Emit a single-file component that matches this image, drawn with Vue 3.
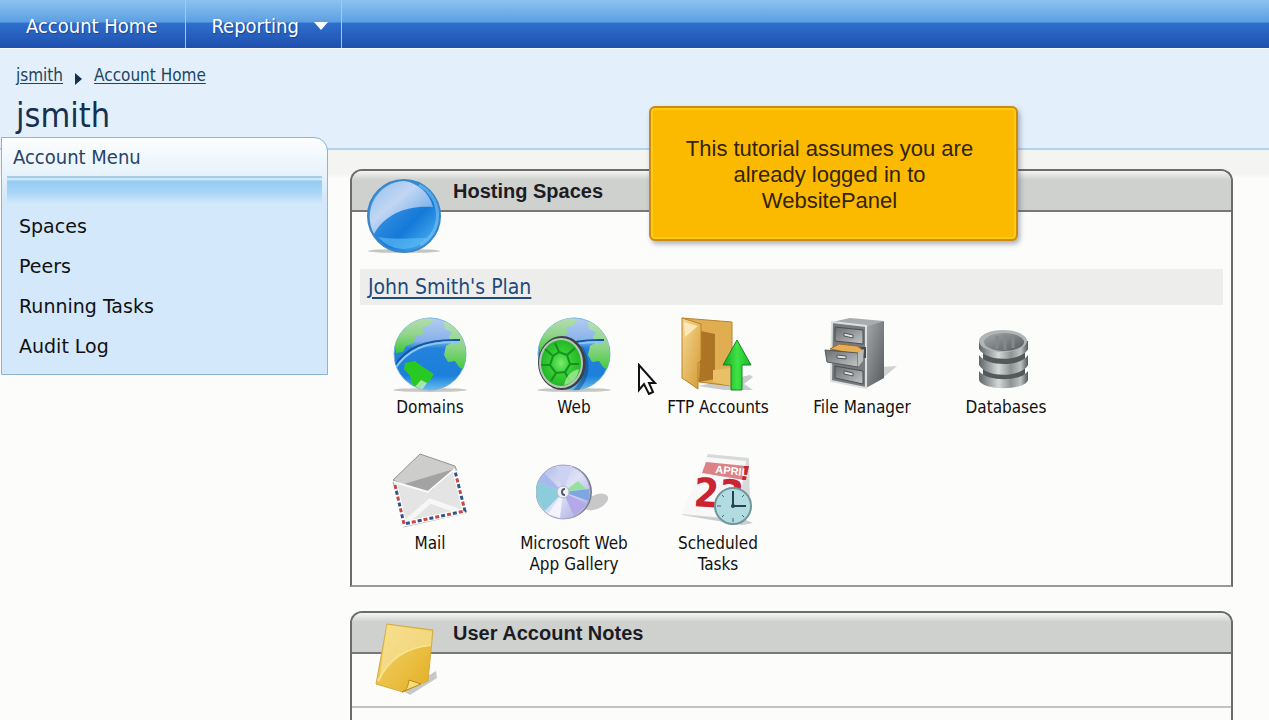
<template>
  <div class="page">
    <nav class="topbar" aria-label="Main">
      <a class="topbar__link" href="#home">Account Home</a>
      <a class="topbar__link topbar__link--menu" href="#reporting">
        Reporting
        <svg class="topbar__caret" viewBox="0 0 14 8" aria-hidden="true">
          <path d="M0 0h14L7 8z" fill="#fff" />
        </svg>
      </a>
    </nav>

    <header class="heading">
      <div class="crumbs">
        <a href="#jsmith">jsmith</a>
        <svg class="crumbs__arrow" viewBox="0 0 7 12" aria-hidden="true">
          <path d="M0 0l7 6-7 6z" fill="#16304a" />
        </svg>
        <a href="#home">Account Home</a>
      </div>
      <h1 class="heading__title">jsmith</h1>
    </header>

    <div class="layout">
      <aside class="menu">
        <h2 class="menu__title">Account Menu</h2>
        <div class="menu__band"></div>
        <ul class="menu__list">
          <li v-for="item in menuItems" :key="item">
            <a class="menu__link" href="#menu">{{ item }}</a>
          </li>
        </ul>
      </aside>

      <main class="content">
        <section class="panel">
          <div class="panel__head">
            <svg class="panel__icon" viewBox="0 0 76 76" aria-hidden="true">
              <defs>
                <linearGradient id="orb" x1="0" y1="0" x2="1" y2="1">
                  <stop offset="0" stop-color="#5ca9ea" />
                  <stop offset="0.6" stop-color="#1479d8" />
                  <stop offset="1" stop-color="#5cc2f7" />
                </linearGradient>
                <linearGradient id="orbShine" x1="0" y1="0" x2="1" y2="1">
                  <stop offset="0" stop-color="#8fc0ee" />
                  <stop offset="0.4" stop-color="#c2d6f3" />
                  <stop offset="1" stop-color="#4a98e4" />
                </linearGradient>
              </defs>
              <ellipse cx="37" cy="73" rx="36" ry="2" fill="#c4c4c2" />
              <circle cx="37" cy="38" r="36" fill="url(#orb)" stroke="#3b86c8" stroke-width="2" />
              <path d="M7 56A36 36 0 0 1 37 3a35 35 0 0 1 29 26C40 27 18 36 7 56z" fill="url(#orbShine)" />
              <path d="M52 7a34 34 0 0 1 1 60" fill="none" stroke="#78c3f5" stroke-width="3" opacity="0.6" />
              <path d="M11 59a33 33 0 0 0 50 1c-15 0-35 2-50-1z" fill="#62c2f6" opacity="0.6" />
            </svg>
            <h2 class="panel__title">Hosting Spaces</h2>
          </div>

          <div class="panel__body">
            <div class="plan"><a href="#plan">John Smith's Plan</a></div>

            <ul class="tiles">
              <li>
                <a class="tile" href="#domains">
                  <svg class="tile__icon" viewBox="0 0 76 76" aria-hidden="true">
                    <defs>
                      <linearGradient id="sea" x1="0" y1="0" x2="0" y2="1">
                        <stop offset="0" stop-color="#b4cdf1" />
                        <stop offset="0.32" stop-color="#86b2ea" />
                        <stop offset="0.42" stop-color="#2482da" />
                        <stop offset="0.8" stop-color="#1c7fda" />
                        <stop offset="1" stop-color="#66bdf0" />
                      </linearGradient>
                      <linearGradient id="land" x1="0" y1="0" x2="0" y2="1">
                        <stop offset="0" stop-color="#b6dfb4" />
                        <stop offset="0.5" stop-color="#8fd489" />
                        <stop offset="1" stop-color="#3cc838" />
                      </linearGradient>
                      <clipPath id="globeClip"><circle cx="38" cy="37" r="36" /></clipPath>
                      <g id="globe">
                        <ellipse cx="38" cy="73" rx="37" ry="2" fill="#c6c6c4" />
                        <circle cx="38" cy="37" r="36" fill="url(#sea)" stroke="#79b3df" />
                        <g clip-path="url(#globeClip)">
                          <path d="M4 36L2 22 14 6 30 0l11 3-4 6-7 1 2 7-8 2-3 7-7 3-3 6z" fill="url(#land)" />
                          <path d="M52 5l8-1 12 12 5 19-2 20-8-5-4-6-7 1-4-7 2-9 5-3-2-6 3-5-7-3z" fill="url(#land)" />
                          <path d="M13 46l10-2 8 6 11 7-5 8-7 2-3 6-5-1-4-13-6-7z" fill="#27c922" />
                          <path d="M22 71l7-8 6 3-6 8z" fill="#c4efb9" opacity="0.8" />
                          <path d="M2 50C14 31 32 22 68 23" fill="none" stroke="#1456a0" stroke-width="2" />
                          <path d="M2 53C14 34 32 24 68 25" fill="none" stroke="#87c6f5" stroke-width="2" />
                        </g>
                      </g>
                    </defs>
                    <use href="#globe" />
                  </svg>
                  <span>Domains</span>
                </a>
              </li>
              <li>
                <a class="tile" href="#web">
                  <svg class="tile__icon" viewBox="0 0 76 76" aria-hidden="true">
                    <defs>
                      <radialGradient id="lens" cx="0.5" cy="0.5" r="0.5">
                        <stop offset="0" stop-color="#7fe874" />
                        <stop offset="0.4" stop-color="#3bd238" />
                        <stop offset="1" stop-color="#22b524" />
                      </radialGradient>
                    </defs>
                    <use href="#globe" />
                    <path d="M44 26c9 15 8 34-7 47h6c12-12 13-33 1-47z" fill="#103a70" opacity="0.45" />
                    <ellipse cx="26" cy="46" rx="24" ry="27" fill="#3b4343" />
                    <ellipse cx="25" cy="46" rx="21" ry="24" fill="url(#lens)" stroke="#b9c7bd" stroke-width="2" />
                    <path d="M23 35l8 3 3 9-5 8-9 1-6-8 3-9zM23 35l-4-9M31 38l8-7M34 47h9M29 55l5 10M20 56l-5 8M14 48H5M17 39l-8-7" fill="none" stroke="#159220" stroke-width="2" />
                    <path d="M28 68c2-9 7-14 15-16-1 8-6 15-15 16z" fill="#a7ec9a" opacity="0.8" />
                  </svg>
                  <span>Web</span>
                </a>
              </li>
              <li>
                <a class="tile" href="#ftp">
                  <svg class="tile__icon" viewBox="0 0 76 76" aria-hidden="true">
                    <defs>
                      <linearGradient id="folder" x1="0" y1="0" x2="1" y2="1">
                        <stop offset="0" stop-color="#f6d994" />
                        <stop offset="1" stop-color="#d49a34" />
                      </linearGradient>
                      <linearGradient id="arrow" x1="0" y1="0" x2="1" y2="0">
                        <stop offset="0" stop-color="#14a51c" />
                        <stop offset="0.5" stop-color="#3ee344" />
                        <stop offset="1" stop-color="#1cb825" />
                      </linearGradient>
                    </defs>
                    <path d="M18 69l20-4 32-7 3 2-9 7 9 6H44z" fill="#c9cccc" />
                    <path d="M2 1l50 4v64l-33-4z" fill="#e0ae50" stroke="#b8832b" />
                    <path d="M21 14l14 3v45l-16 3z" fill="#ad7426" />
                    <path d="M33 53l18-2v18l-18-4z" fill="#eac067" />
                    <path d="M2 1l19 6v36l-3 3v26L2 61z" fill="url(#folder)" stroke="#b78429" />
                    <path d="M4 5l14 4L5 20z" fill="#fff1cd" opacity="0.75" />
                    <path d="M57 23l14 25h-9v25H51V48h-8z" fill="url(#arrow)" stroke="#17822b" />
                  </svg>
                  <span>FTP Accounts</span>
                </a>
              </li>
              <li>
                <a class="tile" href="#files">
                  <svg class="tile__icon" viewBox="0 0 76 76" aria-hidden="true">
                    <defs>
                      <linearGradient id="steel" x1="0" y1="0" x2="1" y2="1">
                        <stop offset="0" stop-color="#a6a9ab" />
                        <stop offset="1" stop-color="#55595c" />
                      </linearGradient>
                      <linearGradient id="drawer" x1="0" y1="0" x2="1" y2="1">
                        <stop offset="0" stop-color="#696d70" />
                        <stop offset="1" stop-color="#c4c7c8" />
                      </linearGradient>
                    </defs>
                    <path d="M57 50l16-1-12 10-9 5z" fill="#cfd1d1" />
                    <path d="M8 5l18-4 34 3-17 5z" fill="#a9acae" />
                    <path d="M42 9l18-5v57L42 71z" fill="url(#steel)" />
                    <path d="M8 5l34 4v62L7 64z" fill="#777b7e" stroke="#dde0e0" stroke-width="2" />
                    <path d="M11 10l28 3v14l-28-3z" fill="url(#drawer)" stroke="#4b4f52" />
                    <path d="M9 31l33-1v11L9 38z" fill="#474747" />
                    <path d="M6 32l9-5 18 2 6 4-3 5z" fill="#e5ad55" stroke="#9e692c" />
                    <path d="M11 49l28 5v13l-28-6z" fill="url(#drawer)" stroke="#4b4f52" />
                    <path d="M1 33l33 3v14L3 45z" fill="url(#drawer)" stroke="#55595c" />
                    <path d="M34 36l6-4-1 12-5 6z" fill="#b9bcbd" />
                    <path d="M20 16l9 2v3l-9-2zM13 38l9 1v3l-9-1zM20 54l9 2v3l-9-2z" fill="#e0e2e3" stroke="#555" />
                  </svg>
                  <span>File Manager</span>
                </a>
              </li>
              <li>
                <a class="tile" href="#databases">
                  <svg class="tile__icon" viewBox="0 0 76 76" aria-hidden="true">
                    <defs>
                      <linearGradient id="metal" x1="0" y1="0" x2="1" y2="0">
                        <stop offset="0" stop-color="#5f6567" />
                        <stop offset="0.4" stop-color="#d5d8d8" />
                        <stop offset="0.65" stop-color="#8d9293" />
                        <stop offset="0.85" stop-color="#bdc1c1" />
                        <stop offset="1" stop-color="#535859" />
                      </linearGradient>
                    </defs>
                    <path d="M15 30h42v34c-6 7-36 7-42 0z" fill="#53595a" />
                    <path d="M11 54c8 11 42 11 49 0v9c-3 11-46 11-49 0z" fill="url(#metal)" />
                    <path d="M11 38c8 12 42 12 49 0v10c-7 13-42 13-49 0z" fill="url(#metal)" />
                    <path d="M11 24h49v8c-7 13-42 13-49 0z" fill="url(#metal)" />
                    <ellipse cx="35" cy="24" rx="24" ry="11" fill="#b0b5b5" />
                    <ellipse cx="36" cy="25" rx="20" ry="9" fill="url(#steel)" />
                    <path d="M29 19v13M37 18v15M45 19v12" stroke="#83898a" stroke-width="3" />
                  </svg>
                  <span>Databases</span>
                </a>
              </li>
              <li>
                <a class="tile" href="#mail">
                  <svg class="tile__icon" viewBox="0 0 76 76" aria-hidden="true">
                    <path d="M1 27L28 1l35 12 3 8-29 24z" fill="#cdcdcb" stroke="#949494" />
                    <path d="M12 31l50-15-26 23z" fill="#a2a3a2" />
                    <path d="M1 29l36 10 27-23 10 44-63 14z" fill="#e4e4e4" stroke="#b0b0b0" />
                    <path d="M13 70l25-22 34 12" fill="none" stroke="#f7f7f7" stroke-width="5" />
                    <path d="M2 29l34 10 27-23" fill="none" stroke="#fafafa" stroke-width="2" />
                    <path d="M3 32l9 39 61-13-10-40" fill="none" stroke="#fff" stroke-width="5" />
                    <path d="M3 32l9 39 61-13-10-40" fill="none" stroke="#c84847" stroke-width="3" stroke-dasharray="4 8" />
                    <path d="M3 32l9 39 61-13-10-40" fill="none" stroke="#2f5487" stroke-width="3" stroke-dasharray="4 8" stroke-dashoffset="-6" />
                  </svg>
                  <span>Mail</span>
                </a>
              </li>
              <li>
                <a class="tile" href="#gallery">
                  <svg class="tile__icon" viewBox="0 0 76 76" aria-hidden="true">
                    <defs>
                      <linearGradient id="disc" x1="0" y1="0" x2="1" y2="1">
                        <stop offset="0" stop-color="#a9b8e4" />
                        <stop offset="0.5" stop-color="#dfe2f6" />
                        <stop offset="1" stop-color="#a3a3de" />
                      </linearGradient>
                    </defs>
                    <ellipse cx="60" cy="49" rx="13" ry="7" fill="#c8c8c8" transform="rotate(-25 60 49)" />
                    <circle cx="29" cy="39" r="27" fill="#777b90" />
                    <circle cx="27" cy="39" r="27" fill="url(#disc)" stroke="#a2a9c3" />
                    <path d="M27 39L2 29A27 27 0 0 0 9 58z" fill="#8dcddb" />
                    <path d="M27 39L8 20l-6 9z" fill="#a7b8ee" />
                    <path d="M27 39L20 13l16 0z" fill="#cbd2f2" />
                    <path d="M27 39l15-11 8 8z" fill="#95e29e" />
                    <path d="M27 39l26-3v12z" fill="#80a6e2" />
                    <path d="M27 39l24 12-13 12z" fill="#b3a8ea" />
                    <path d="M27 39L12 61l12 4z" fill="#f4f3fc" />
                    <circle cx="27" cy="39" r="6" fill="#eceff7" stroke="#b3b9ca" />
                    <path d="M29 36a3 3 0 1 0 0 6" fill="#fff" stroke="#555866" stroke-width="2" />
                  </svg>
                  <span>Microsoft Web App Gallery</span>
                </a>
              </li>
              <li>
                <a class="tile" href="#tasks">
                  <svg class="tile__icon" viewBox="0 0 76 76" aria-hidden="true">
                    <path d="M2 62l60 10 11-2-12-5z" fill="#c9cccc" />
                    <path d="M28 1l41 4 1 47-10 15L2 62z" fill="#d6dad9" />
                    <path d="M26 4l40 4-9 58L2 61z" fill="#f8f8f8" />
                    <path d="M26 9l40 4-2 14-42-7z" fill="#dc8285" />
                    <path d="M64 13h5l-3 14h-4z" fill="#c12b33" />
                    <text x="35" y="20" class="calendar-month" transform="rotate(6 35 20)">APRIL</text>
                    <text x="13" y="53" class="calendar-day" transform="rotate(4 13 53)">23</text>
                    <circle cx="53" cy="53" r="18" fill="#b1dce1" stroke="#72969c" stroke-width="2" />
                    <path d="M39 64a18 18 0 0 1 27-23 18 18 0 0 0-27 23z" fill="#d5eef0" />
                    <path d="M53 38v15h13" fill="none" stroke="#24434c" stroke-width="2" />
                    <path d="M53 65v4M37 53h4M42 42l2 2M64 64l-2-2M42 64l2-2M64 42l-2 2" stroke="#436a72" />
                    <circle cx="53" cy="53" r="2" fill="#24434c" />
                  </svg>
                  <span>Scheduled Tasks</span>
                </a>
              </li>
            </ul>
          </div>
        </section>

        <section class="panel panel--open">
          <div class="panel__head">
            <svg class="panel__icon" viewBox="0 0 76 76" aria-hidden="true">
              <defs>
                <linearGradient id="note" x1="0" y1="0" x2="1" y2="1">
                  <stop offset="0" stop-color="#f3d571" />
                  <stop offset="1" stop-color="#e3ae20" />
                </linearGradient>
              </defs>
              <path d="M36 71l33-20 1 7-27 17z" fill="#c6c9c9" />
              <path d="M20 4l46 6-5 51-10 4-15 7L9 64z" fill="url(#note)" stroke="#d3ac44" />
              <path d="M20 5l45 6-1 13C41 26 22 38 13 56z" fill="#f9e5a0" opacity="0.65" />
              <path d="M11 61C21 40 39 27 64 25" fill="none" stroke="#f8e28f" stroke-width="2" />
              <path d="M35 72c6-2 6-8 7-12l12 4z" fill="#f9dc7b" stroke="#bd8a14" />
            </svg>
            <h2 class="panel__title">User Account Notes</h2>
          </div>
          <div class="panel__toolbar"></div>
        </section>
      </main>
    </div>

    <div class="callout" role="note">
      This tutorial assumes you are already logged in to WebsitePanel
    </div>

    <svg class="cursor" viewBox="0 0 20 32" aria-hidden="true">
      <path d="M2 2v25l5-6 5 10 4-2-4-9h6z" fill="#fff" stroke="#111" stroke-width="2" />
    </svg>
  </div>
</template>

<script setup>
const menuItems = ["Spaces", "Peers", "Running Tasks", "Audit Log"];
</script>

<style>
body {
  margin: 0;
  background: #fcfdfb;
}
</style>

<style scoped>
.page {
  --condensed: "DejaVu Sans Condensed", Tahoma, "Noto Sans", sans-serif;
  --wide: "DejaVu Sans", Verdana, sans-serif;
  --arial: "Liberation Sans", Arial, sans-serif;

  --navy: #16304f;
  --link: #1c4a80;
  --line-gray: #6b6d6b;

  position: relative;
  min-height: 100vh;
  display: flex;
  flex-direction: column;
  font-family: var(--condensed);
  color: #111;
}

.topbar {
  display: flex;
  height: 48px;
  padding-left: 1px;
  background: linear-gradient(
    180deg,
    #8cc3ee 0%,
    #5c9fe2 46%,
    #2e6fcd 48%,
    #1e50ae 100%
  );
}

.topbar__link {
  display: flex;
  align-items: center;
  gap: 15px;
  padding: 4px 28px 0 25px;
  border-right: 1px solid #a3c8ef;
  color: #fff;
  font-size: 20px;
  line-height: 28px;
  text-decoration: none;
  text-shadow: 1px 1px 1px rgba(10, 40, 100, 0.5);
}

.topbar__link--menu {
  padding-right: 13px;
}

.topbar__caret {
  width: 14px;
  height: 8px;
}

.heading {
  height: 102px;
  box-sizing: border-box;
  padding: 16px 16px 0;
  background: #e3f0fb;
  border-top: 1px solid #f4f9fd;
  border-bottom: 2px solid #b2d3ea;
}

.crumbs {
  display: flex;
  align-items: center;
  gap: 12px;
  font-size: 17px;
  line-height: 20px;
}

.crumbs a {
  color: #1d4560;
  text-underline-offset: 2px;
}

.crumbs__arrow {
  width: 7px;
  height: 12px;
  margin-top: 8px;
}

.heading__title {
  margin: 10px 0 0;
  color: var(--navy);
  font-size: 34px;
  font-weight: 400;
  line-height: 40px;
}

.layout {
  flex: 1;
  display: flex;
  align-items: flex-start;
  gap: 22px;
  padding: 0 36px 0 1px;
  background: linear-gradient(180deg, #f4f4f2 0, #f4f4f2 24px, #fcfdfb 28px);
}

.menu {
  position: relative;
  flex: 0 0 327px;
  box-sizing: border-box;
  margin-top: -13px;
  min-height: 238px;
  padding: 0 5px;
  border: 1px solid #8db4d2;
  border-radius: 0 14px 0 0;
  background: linear-gradient(180deg, #fcfefe 0, #e6f2fb 38px, #d3e8fa 60px);
}

.menu__title {
  margin: 0;
  padding: 0 6px;
  color: #274468;
  font-size: 20px;
  font-weight: 400;
  line-height: 38px;
}

.menu__band {
  height: 26px;
  border-top: 2px solid #a3cdec;
  background: linear-gradient(180deg, #cfe6f9 0, #cfe6f9 2px, #92ccf3 3px, #a9d5f6 14px, #d3e8fa 26px);
}

.menu__list {
  margin: 0;
  padding: 2px 12px 0;
  list-style: none;
}

.menu__link {
  display: block;
  color: #111;
  font-family: var(--wide);
  font-size: 19px;
  line-height: 40px;
  text-decoration: none;
}

.content {
  flex: 1;
  align-self: stretch;
  min-width: 0;
  display: flex;
  flex-direction: column;
  gap: 24px;
  padding-top: 19px;
}

.panel {
  border: 2px solid var(--line-gray);
  border-bottom-color: #999b99;
  border-radius: 12px 12px 0 0;
  background: #fcfdfb;
}

.panel--open {
  flex: 1;
  border-bottom: 0;
}

.panel__head {
  display: flex;
  gap: 10px;
  height: 90px;
  padding-left: 15px;
  border-radius: 10px 10px 0 0;
  background: linear-gradient(
    180deg,
    #f4f5f4 0,
    #cfd1ce 9px,
    #cfd1ce 39px,
    #777977 39px,
    #777977 41px,
    transparent 41px
  );
}

.panel__icon {
  flex: none;
  width: 76px;
  height: 76px;
  margin-top: 7px;
}

.panel__title {
  margin: 0;
  color: #1c1c24;
  font-family: var(--arial);
  font-size: 20px;
  font-weight: 700;
  line-height: 40px;
}

.panel__body {
  padding: 8px 8px 0;
}

.plan {
  padding: 0 8px;
  background: #ededeb;
  font-size: 21px;
  line-height: 36px;
}

.plan a {
  color: var(--link);
  text-underline-offset: 3px;
}

.tiles {
  display: grid;
  grid-template-columns: repeat(5, 144px);
  row-gap: 4px;
  margin: 0 0 0 -2px;
  padding: 12px 0 0;
  list-style: none;
}

.tile {
  display: flex;
  flex-direction: column;
  align-items: center;
  gap: 4px;
  min-height: 132px;
  padding: 0 12px;
  box-sizing: border-box;
  color: #111;
  font-size: 17px;
  line-height: 21px;
  text-align: center;
  text-decoration: none;
}

.tile__icon {
  width: 76px;
  height: 76px;
}

.calendar-month {
  fill: #fff;
  font: 700 11px var(--arial);
}

.calendar-day {
  fill: #cb2430;
  font: 700 40px "Liberation Sans Narrow", "DejaVu Sans Condensed", sans-serif;
}

.panel__toolbar {
  height: 3px;
  border-bottom: 2px solid #c2c4c1;
}

.callout {
  position: absolute;
  top: 106px;
  left: 649px;
  width: 369px;
  box-sizing: border-box;
  padding: 28px 42px 25px 34px;
  border: 2px solid #c98a16;
  border-radius: 6px;
  background: #fbb900;
  box-shadow: inset 0 0 0 2px #fecb10, 2px 3px 5px rgba(60, 60, 90, 0.4);
  color: #33240a;
  font-family: var(--arial);
  font-size: 22px;
  line-height: 26px;
  text-align: center;
}

.cursor {
  position: absolute;
  top: 363px;
  left: 637px;
  width: 20px;
  height: 32px;
}
</style>
